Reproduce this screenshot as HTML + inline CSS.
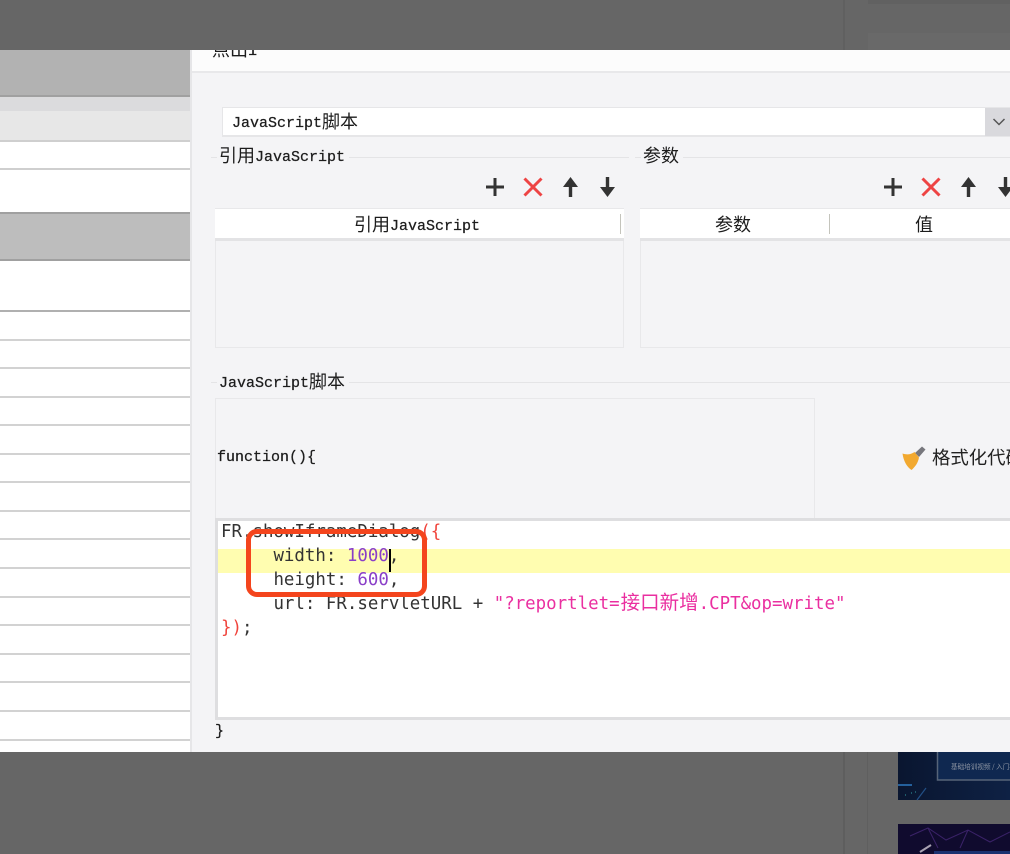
<!DOCTYPE html>
<html lang="zh">
<head>
<meta charset="utf-8">
<style>
html,body{margin:0;padding:0;background:#666;}
#p{position:relative;width:1010px;height:854px;overflow:hidden;background:#666;}
#p div,#p span.a,#p svg{position:absolute;}
.t{font-family:"Liberation Mono","Noto Sans CJK SC",monospace;font-size:15px;line-height:20px;color:#1c1c1c;white-space:nowrap;-webkit-text-stroke:.25px #1c1c1c;}
.t i{font-family:"Noto Sans CJK SC",sans-serif;font-style:normal;font-size:18px;line-height:0;-webkit-text-stroke:0;position:relative;top:1px;}
.s{font-family:"Liberation Sans","Noto Sans CJK SC",sans-serif;color:#222;white-space:nowrap;}
.c{font-family:"DejaVu Sans Mono","Noto Sans CJK SC",monospace;font-size:17.43px;line-height:24px;color:#333;white-space:pre;}
.c i{font-family:"Noto Sans CJK SC",sans-serif;font-style:normal;font-size:19.5px;line-height:0;margin-left:1px;}
.r{left:0;width:190px;height:2px;background:#d2d2d2;}
</style>
</head>
<body>
<div id="p">
  <!-- background bits behind the overlay -->
  <div style="left:843px;top:0;width:2px;height:50px;background:#606060"></div>
  <div style="left:868px;top:0;width:142px;height:4px;background:#616161"></div>
  <div style="left:868px;top:33px;width:142px;height:17px;background:#696969"></div>
  <div style="left:843px;top:752px;width:2px;height:102px;background:#5e5e5e"></div>
  <div style="left:867px;top:752px;width:1px;height:102px;background:#5f5f5f"></div>
  <svg style="left:898px;top:752px" width="112" height="102" viewBox="0 0 112 102">
    <defs>
      <linearGradient id="g" x1="0" y1="0" x2="1" y2="0"><stop offset="0" stop-color="#0a1630"/><stop offset="1" stop-color="#0e2144"/></linearGradient>
    </defs>
    <rect width="112" height="48" fill="url(#g)"/>
    <path d="M0 33H14" stroke="#24609c" stroke-width="2"/>
    <path d="M19 48L28 36" stroke="#224f86" stroke-width="1.2"/>
    <path d="M7 43h1M13 41h1M17 40h1" stroke="#24707e" stroke-width="1.5"/>
    <rect x="39.5" y="-3" width="80" height="31" fill="#0f2850" stroke="#566478" stroke-width="1.5"/>
    <text x="53" y="17" font-family="Noto Sans CJK SC,sans-serif" font-size="6.6" fill="#8d95a3">基础培训视频 / 入门视频</text>
    <rect y="72" width="112" height="30" fill="#100b2e"/>
    <path d="M12 84L30 76L48 88L70 78L92 90L112 80M30 76L40 96M70 78L62 96" stroke="#3a2268" stroke-width="1" fill="none"/>
    <path d="M22 100L33 93" stroke="#a9a3b2" stroke-width="2"/>
    <rect x="36" y="99" width="76" height="3" fill="#1b3270"/>
  </svg>

  <!-- left list -->
  <div style="left:0;top:50px;width:190px;height:702px;background:#fff"></div>
  <div style="left:0;top:50px;width:190px;height:45px;background:#b2b2b2"></div>
  <div style="left:0;top:95px;width:190px;height:2px;background:#a0a0a0"></div>
  <div style="left:0;top:97px;width:190px;height:14px;background:#dbdbdd"></div>
  <div style="left:0;top:111px;width:190px;height:29px;background:#e7e7e7"></div>
  <div class="r" style="top:140px;background:#cfcfcf"></div>
  <div class="r" style="top:168px;background:#cfcfcf"></div>
  <div style="left:0;top:212px;width:190px;height:2px;background:#a0a0a0"></div>
  <div style="left:0;top:214px;width:190px;height:45px;background:#bdbdbd"></div>
  <div style="left:0;top:259px;width:190px;height:2px;background:#a0a0a0"></div>
  <div class="r" style="top:310px;background:#b0b0b0"></div>
  <div class="r" style="top:339px"></div>
  <div class="r" style="top:367px"></div>
  <div class="r" style="top:396px"></div>
  <div class="r" style="top:424px"></div>
  <div class="r" style="top:453px"></div>
  <div class="r" style="top:481px"></div>
  <div class="r" style="top:510px"></div>
  <div class="r" style="top:538px"></div>
  <div class="r" style="top:567px"></div>
  <div class="r" style="top:596px"></div>
  <div class="r" style="top:624px"></div>
  <div class="r" style="top:653px"></div>
  <div class="r" style="top:681px"></div>
  <div class="r" style="top:710px"></div>
  <div class="r" style="top:739px"></div>

  <!-- dialog -->
  <div style="left:190px;top:50px;width:820px;height:702px;background:#f4f4f6;overflow:hidden">
    <div style="left:0;top:0;width:2px;height:702px;background:#e6e6e8"></div>
    <div style="left:2px;top:0;width:818px;height:21px;background:#fcfcfc"></div>
    <div style="left:2px;top:21px;width:818px;height:2px;background:#e8e8ea"></div>
    <div class="t" style="left:22px;top:-8px"><i>点出</i>1</div>
  </div>

  <!-- select -->
  <div style="left:222px;top:107px;width:788px;height:30px;background:#fff;box-sizing:border-box;border:solid #e6e6e8;border-width:1px 0 2px 1px"></div>
  <div style="left:985px;top:108px;width:25px;height:28px;background:#d9d9dd"></div>
  <svg style="left:992px;top:117px" width="14" height="10" viewBox="0 0 14 10"><path d="M1.5 2L7 7.5L12.5 2" fill="none" stroke="#555" stroke-width="1.5"/></svg>
  <div class="t" style="left:232px;top:114px">JavaScript<i>脚本</i></div>

  <!-- section labels -->
  <div style="left:211px;top:157px;width:6px;height:1px;background:#e4e4e6"></div>
  <div class="t" style="left:219px;top:148px"><i>引用</i>JavaScript</div>
  <div style="left:349px;top:157px;width:280px;height:1px;background:#e4e4e6"></div>
  <div style="left:635px;top:157px;width:6px;height:1px;background:#e4e4e6"></div>
  <div class="t" style="left:643px;top:148px"><i>参数</i></div>
  <div style="left:683px;top:157px;width:327px;height:1px;background:#e4e4e6"></div>

  <!-- toolbar icons -->
  <svg style="left:480px;top:172px" width="145" height="30" viewBox="480 172 145 30">
    <path d="M486 187H504M495 178V196" stroke="#333" stroke-width="3" fill="none"/>
    <path d="M524.5 178.5L541.5 195.5M541.5 178.5L524.5 195.5" stroke="#ee4444" stroke-width="3" fill="none"/>
    <path d="M570.5 197V184" stroke="#333" stroke-width="3.4" fill="none"/>
    <path d="M570.5 177L578 187H563Z" fill="#333"/>
    <path d="M607.5 177V190" stroke="#333" stroke-width="3.4" fill="none"/>
    <path d="M607.5 197L615 187H600Z" fill="#333"/>
  </svg>
  <svg style="left:878px;top:172px" width="132" height="30" viewBox="878 172 132 30">
    <path d="M884 187H902M893 178V196" stroke="#333" stroke-width="3" fill="none"/>
    <path d="M922.5 178.5L939.5 195.5M939.5 178.5L922.5 195.5" stroke="#ee4444" stroke-width="3" fill="none"/>
    <path d="M968.5 197V184" stroke="#333" stroke-width="3.4" fill="none"/>
    <path d="M968.5 177L976 187H961Z" fill="#333"/>
    <path d="M1005.5 177V190" stroke="#333" stroke-width="3.4" fill="none"/>
    <path d="M1005.5 197L1013 187H998Z" fill="#333"/>
  </svg>

  <!-- left table -->
  <div style="left:215px;top:208px;width:409px;height:30px;background:#fff;border-top:1px solid #e8e8ea;box-sizing:border-box"></div>
  <div style="left:215px;top:238px;width:409px;height:3px;background:#e3e3e5"></div>
  <div style="left:215px;top:241px;width:409px;height:107px;box-sizing:border-box;border:solid #e8e8ea;border-width:0 1px 1px 1px"></div>
  <div style="left:620px;top:214px;width:1px;height:20px;background:#c4c4bc"></div>
  <div class="t" style="left:354px;top:217px"><i>引用</i>JavaScript</div>

  <!-- right table -->
  <div style="left:640px;top:208px;width:370px;height:30px;background:#fff;border-top:1px solid #e8e8ea;box-sizing:border-box"></div>
  <div style="left:640px;top:238px;width:370px;height:3px;background:#e3e3e5"></div>
  <div style="left:640px;top:241px;width:370px;height:107px;box-sizing:border-box;border:solid #e8e8ea;border-width:0 0 1px 1px"></div>
  <div style="left:829px;top:214px;width:1px;height:20px;background:#c4c4bc"></div>
  <div class="t" style="left:715px;top:217px"><i>参数</i></div>
  <div class="t" style="left:915px;top:217px"><i>值</i></div>

  <!-- JS section -->
  <div style="left:211px;top:382px;width:6px;height:1px;background:#e4e4e6"></div>
  <div class="t" style="left:219px;top:374px">JavaScript<i>脚本</i></div>
  <div style="left:349px;top:382px;width:661px;height:1px;background:#e4e4e6"></div>
  <div style="left:215px;top:398px;width:600px;height:120px;box-sizing:border-box;border:solid #e8e8ea;border-width:1px 1px 0 1px"></div>
  <div class="t" style="left:217px;top:448px">function(){</div>

  <!-- format button -->
  <svg style="left:900px;top:444px" width="28" height="28" viewBox="0 0 28 28">
    <path d="M15 9L22 2.5L25.5 5.5L19 13Z" fill="#77777d"/>
    <path d="M2.5 9.5C7 11 11 10.5 14.5 8L19 13.5C18 19 15 23 11.5 26C7 23 3.5 17 2.5 9.5Z" fill="#f2a930"/>
  </svg>
  <div class="s" style="left:932px;top:448px;font-size:18.4px;line-height:20px">格式化代码</div>

  <!-- code box -->
  <div style="left:215px;top:518px;width:795px;height:202px;background:#fff;box-sizing:border-box;border:solid #dedee0;border-width:3px 0 3px 3px"></div>
  <div style="left:218px;top:549px;width:792px;height:24px;background:#fffdb0"></div>
  <div class="c" style="left:221px;top:520px">FR.showIframeDialog<span style="color:#f0443c">({</span></div>
  <div class="c" style="left:221px;top:544px">     width: <span style="color:#8a3fc8">1000</span>,</div>
  <div class="c" style="left:221px;top:568px">     height: <span style="color:#8a3fc8">600</span>,</div>
  <div class="c" style="left:221px;top:592px">     url: FR.servletURL + <span style="color:#ea2fa0">"?reportlet=<i>接口新增</i>.CPT&amp;op=write"</span></div>
  <div class="c" style="left:221px;top:616px"><span style="color:#f0443c">})</span>;</div>
  <div style="left:389px;top:549px;width:2px;height:23px;background:#000"></div>
  <div class="t" style="left:215px;top:722px">}</div>

  <!-- red annotation -->
  <div style="left:246px;top:529px;width:181px;height:68px;box-sizing:border-box;border:5px solid #f4451d;border-radius:11px"></div>
</div>
</body>
</html>
